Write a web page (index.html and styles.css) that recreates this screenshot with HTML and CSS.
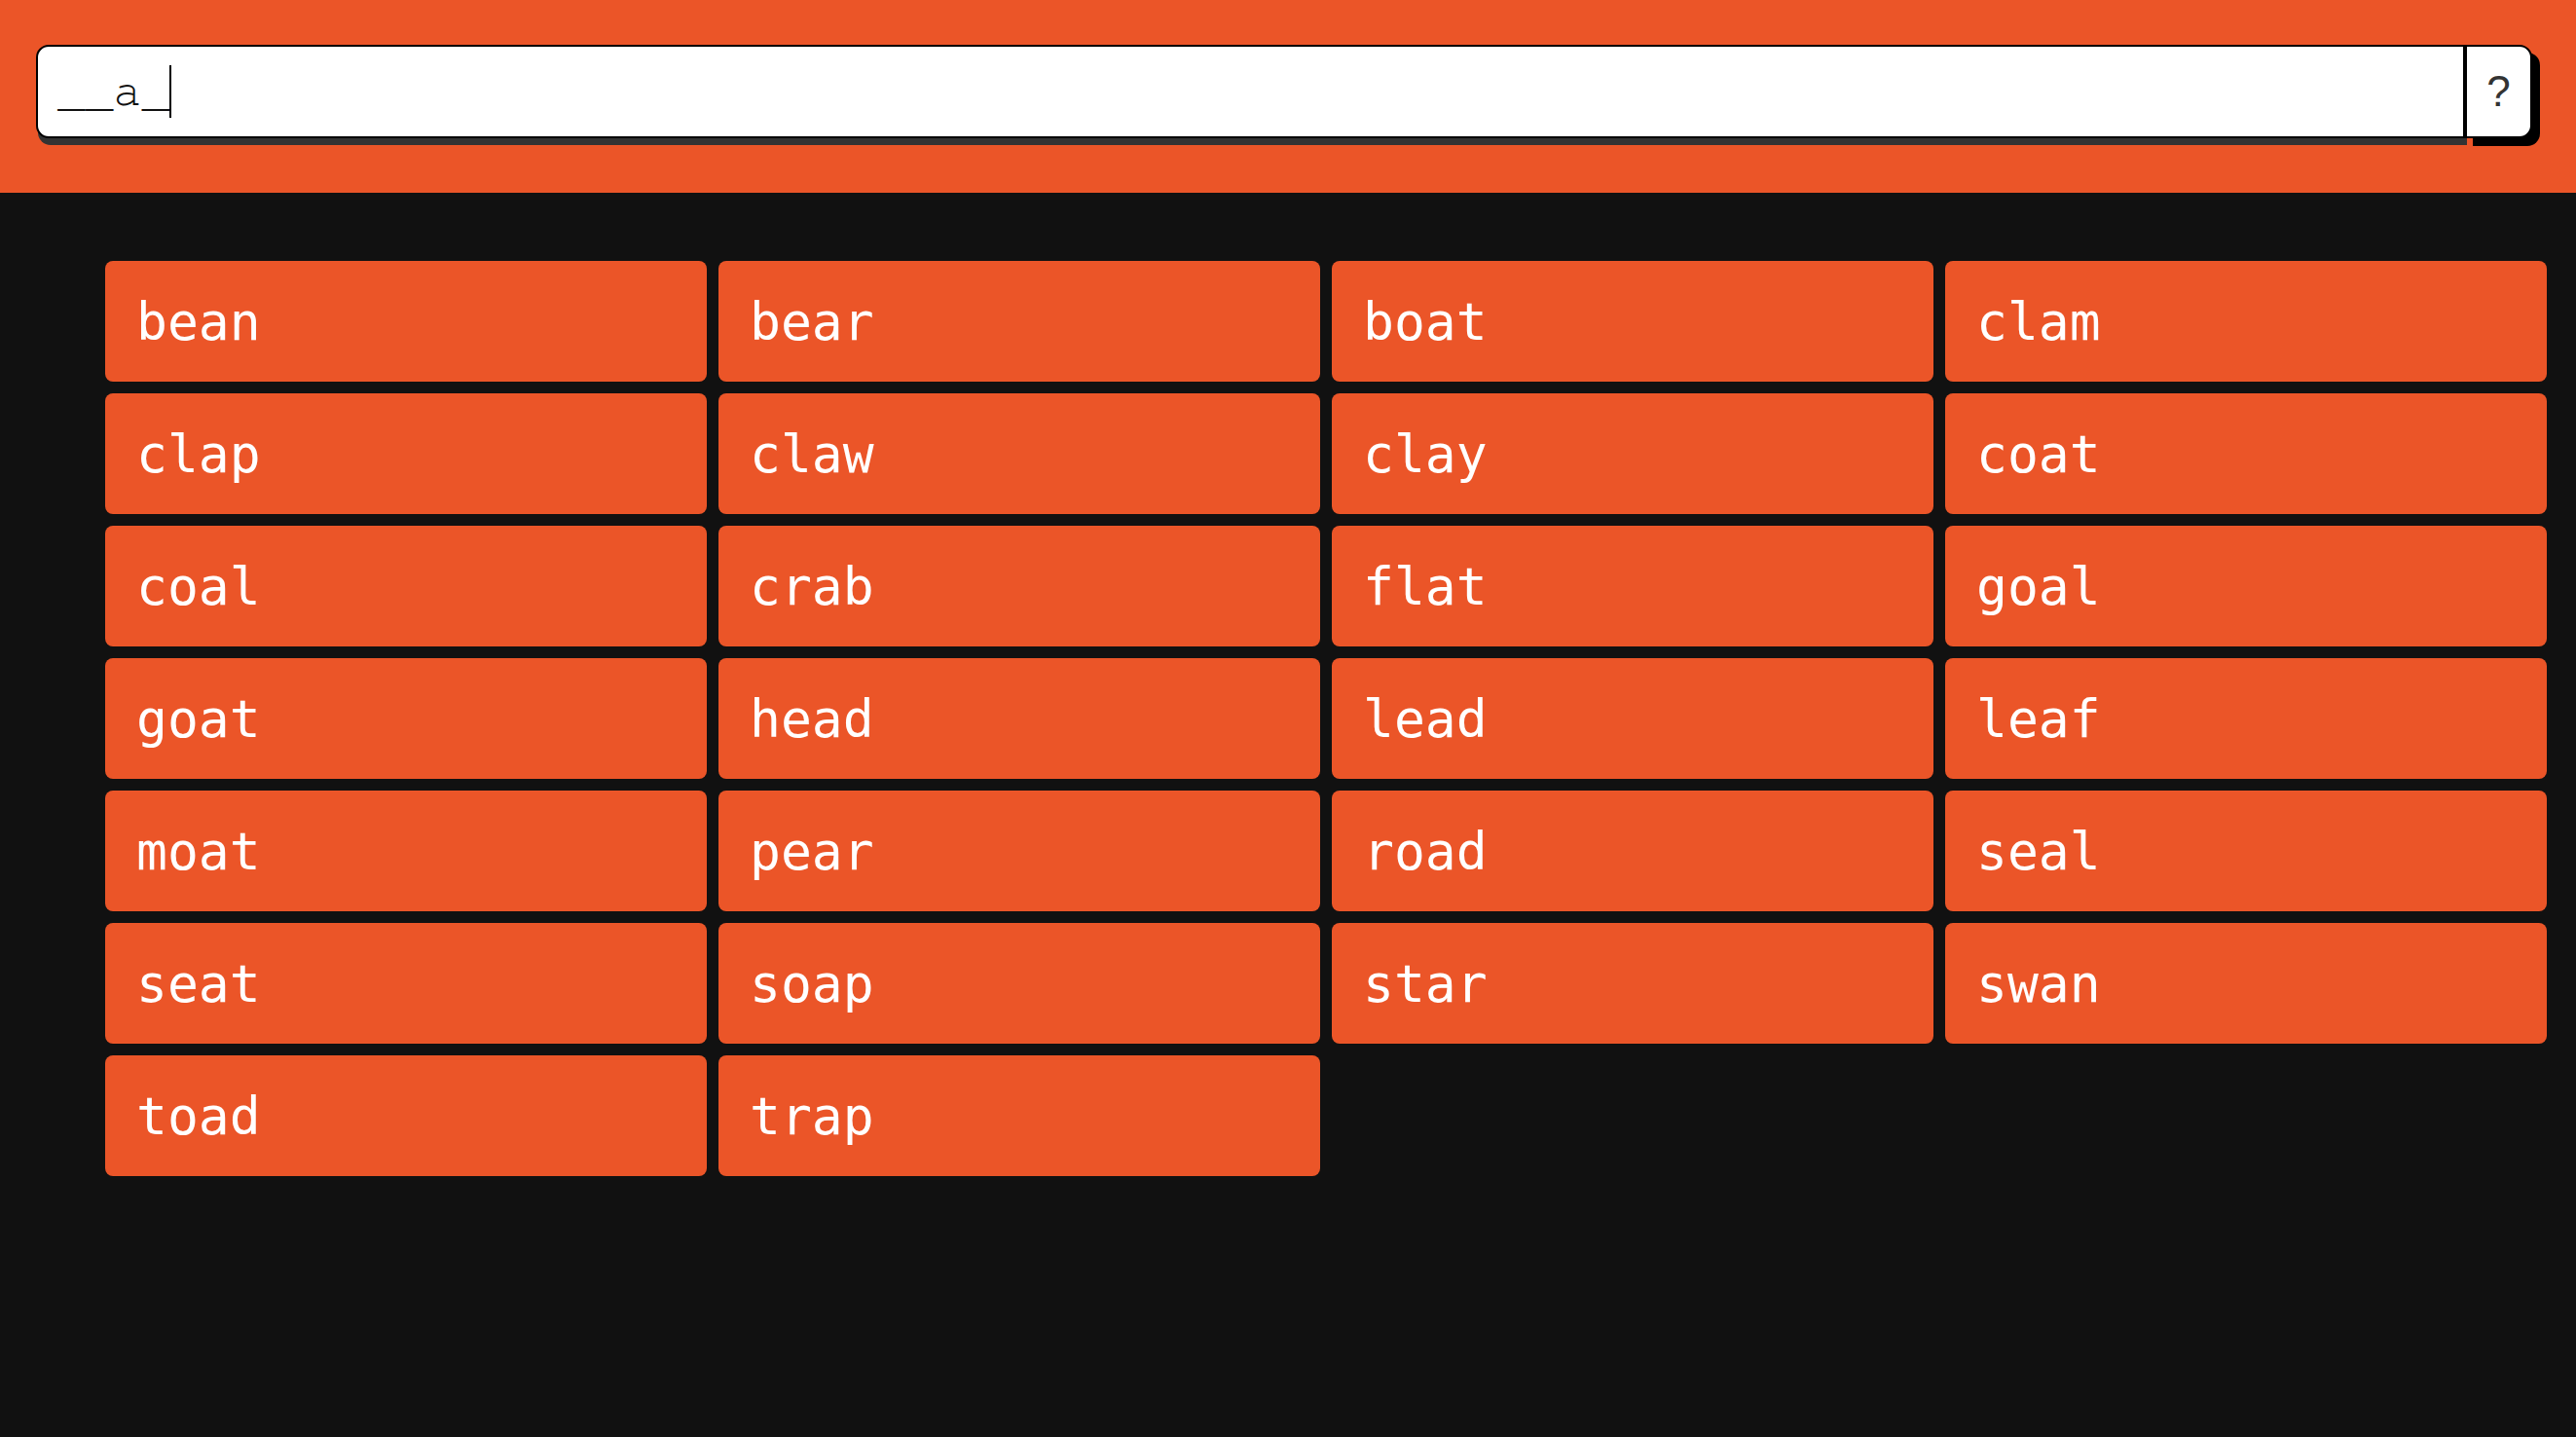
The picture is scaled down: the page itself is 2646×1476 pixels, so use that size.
FILE: index.html
```html
<!DOCTYPE html>
<html lang="en">
<head>
<meta charset="utf-8">
<title>Word finder</title>
<link rel="stylesheet" href="styles.css">
</head>
<body>
<header class="top">
  <div class="search">
    <div class="field"><span class="value">__a_</span><span class="caret"></span></div>
    <button class="help" type="button">?</button>
  </div>
</header>
<main class="results">
  <div class="word">bean</div>
  <div class="word">bear</div>
  <div class="word">boat</div>
  <div class="word">clam</div>
  <div class="word">clap</div>
  <div class="word">claw</div>
  <div class="word">clay</div>
  <div class="word">coat</div>
  <div class="word">coal</div>
  <div class="word">crab</div>
  <div class="word">flat</div>
  <div class="word">goal</div>
  <div class="word">goat</div>
  <div class="word">head</div>
  <div class="word">lead</div>
  <div class="word">leaf</div>
  <div class="word">moat</div>
  <div class="word">pear</div>
  <div class="word">road</div>
  <div class="word">seal</div>
  <div class="word">seat</div>
  <div class="word">soap</div>
  <div class="word">star</div>
  <div class="word">swan</div>
  <div class="word">toad</div>
  <div class="word">trap</div>
</main>
</body>
</html>
```
FILE: styles.css
```css
html, body {
  margin: 0;
  padding: 0;
  background: #111111;
  min-height: 100%;
}

body {
  font-family: "DejaVu Sans Mono", monospace;
}

.top {
  background: #eb5528;
  height: 198px;
  box-sizing: border-box;
  padding: 46px 45px 0 37px;
}

.search {
  display: flex;
  height: 96px;
}

.field {
  flex: 1;
  display: flex;
  align-items: center;
  box-sizing: border-box;
  background: #fff;
  border: 2px solid #000;
  border-radius: 13px 0 0 13px;
  box-shadow: 2px 7px 0 #333;
  padding: 0 20px;
  font-family: "Nimbus Mono PS", "Nimbus Mono L", "FreeMono", "Courier", "Liberation Mono", monospace;
  font-size: 48px;
  color: #111;
}

.value {
  line-height: 54px;
}

.caret {
  display: inline-block;
  width: 2px;
  height: 54px;
  background: #000;
}

.help {
  width: 69px;
  box-sizing: border-box;
  background: #fff;
  border: 2px solid #000;
  border-radius: 0 13px 13px 0;
  box-shadow: 8px 8px 0 #000;
  font-family: "Liberation Sans", Arial, sans-serif;
  font-size: 44px;
  color: #333;
  padding: 0;
  margin: 0;
}

.results {
  display: grid;
  grid-template-columns: repeat(4, 1fr);
  gap: 12px;
  padding: 70px 30px 0 108px;
}

.word {
  background: #eb5528;
  color: #fff;
  border-radius: 8px;
  height: 124px;
  display: flex;
  align-items: center;
  padding: 0 32px;
  font-size: 53px;
}
```
